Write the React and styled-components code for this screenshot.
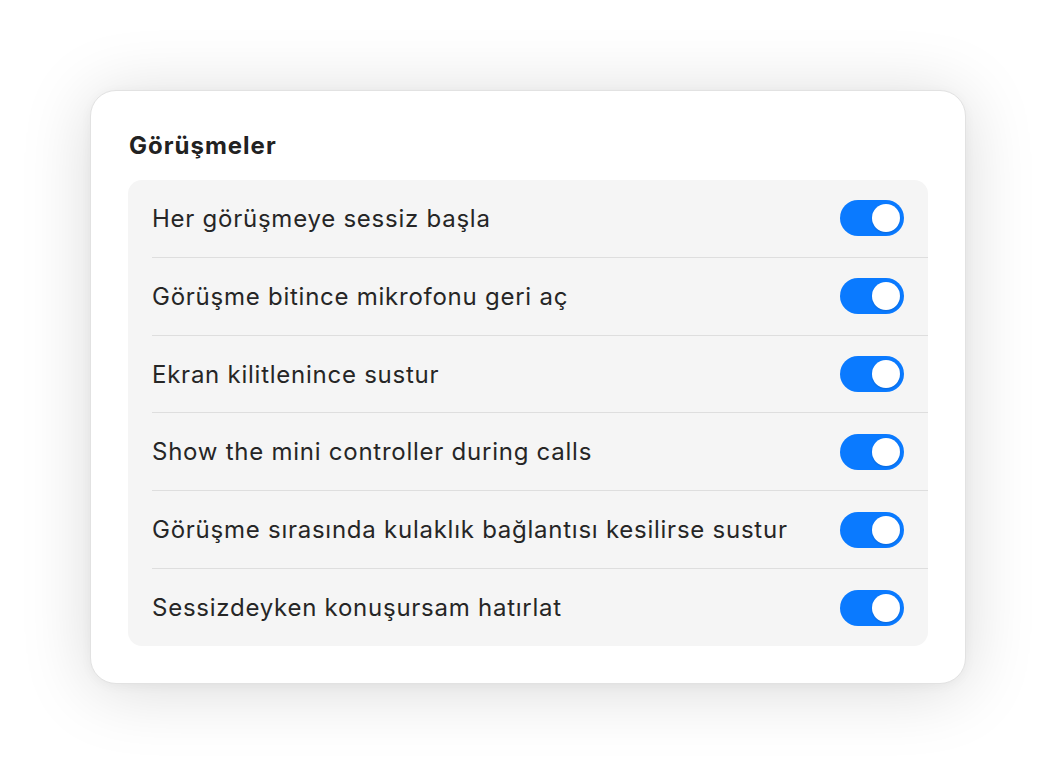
import React, { useState } from 'react';
import styled, { createGlobalStyle } from 'styled-components';

const GlobalStyle = createGlobalStyle`
  html, body {
    margin: 0;
    padding: 0;
    background: #ffffff;
  }
  body {
    font-family: Inter, "Noto Sans", "Liberation Sans", sans-serif;
    -webkit-font-smoothing: antialiased;
  }
`;

const Page = styled.div`
  display: flex;
  align-items: center;
  justify-content: center;
  width: 1056px;
  height: 774px;
  background: #ffffff;
`;

const Card = styled.section`
  display: flex;
  flex-direction: column;
  box-sizing: border-box;
  width: 876px;
  height: 594px;
  padding: 37px 37px 37px;
  background: #ffffff;
  border: 1px solid #e2e2e2;
  border-radius: 26px;
  box-shadow: 0 6px 70px rgba(0, 0, 0, 0.15), 0 2px 12px rgba(0, 0, 0, 0.04);
`;

const Title = styled.h2`
  margin: 0 0 16px 1px;
  font-size: 24px;
  font-weight: 700;
  line-height: 36px;
  letter-spacing: 1px;
  color: #222222;
`;

const Group = styled.div`
  display: flex;
  flex-direction: column;
  background: #f5f5f5;
  border-radius: 14px;
  overflow: hidden;
`;

const Row = styled.div`
  display: flex;
  align-items: center;
  justify-content: space-between;
  height: 77px;
  margin-left: 24px;
  padding-right: 24px;
  border-top: ${(props) => (props.first ? 'none' : '1.5px solid #dedede')};
`;

const Label = styled.span`
  font-size: 24px;
  color: #262626;
  letter-spacing: 0.75px;
`;

const Switch = styled.button`
  position: relative;
  width: 64px;
  height: 36px;
  padding: 0;
  border: none;
  border-radius: 18px;
  background: ${(props) => (props.on ? '#0a7aff' : '#d9d9dc')};
  cursor: pointer;
  flex-shrink: 0;
`;

const Knob = styled.span`
  position: absolute;
  top: 4px;
  left: ${(props) => (props.on ? '32px' : '4px')};
  width: 28px;
  height: 28px;
  border-radius: 50%;
  background: #ffffff;
  box-shadow: 0 1px 2px rgba(0, 0, 0, 0.15);
`;

const items = [
  'Her görüşmeye sessiz başla',
  'Görüşme bitince mikrofonu geri aç',
  'Ekran kilitlenince sustur',
  'Show the mini controller during calls',
  'Görüşme sırasında kulaklık bağlantısı kesilirse sustur',
  'Sessizdeyken konuşursam hatırlat',
];

export default function App() {
  const [state, setState] = useState(items.map(() => true));

  const toggle = (i) => setState((s) => s.map((v, j) => (j === i ? !v : v)));

  return (
    <Page>
      <GlobalStyle />
      <Card>
        <Title>Görüşmeler</Title>
        <Group>
          {items.map((label, i) => (
            <Row key={label} first={i === 0}>
              <Label>{label}</Label>
              <Switch on={state[i]} onClick={() => toggle(i)} aria-label={label}>
                <Knob on={state[i]} />
              </Switch>
            </Row>
          ))}
        </Group>
      </Card>
    </Page>
  );
}
